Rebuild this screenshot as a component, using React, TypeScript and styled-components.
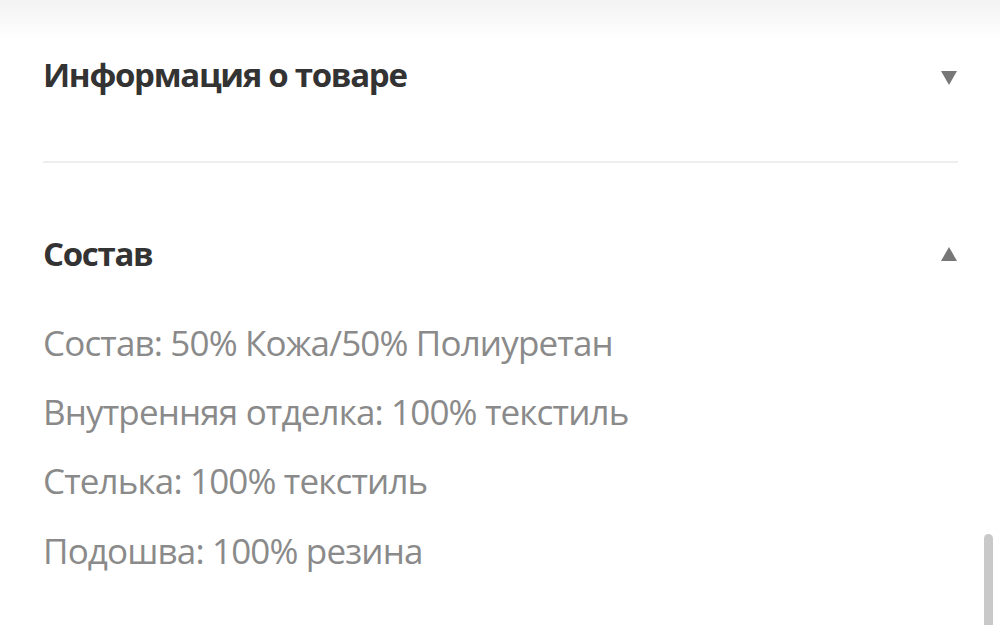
import styled, { createGlobalStyle } from "styled-components"

const GlobalStyle = createGlobalStyle`
  html, body {
    margin: 0;
    padding: 0;
    background: #fff;
  }
  body {
    font-family: "Open Sans", "Noto Sans", sans-serif;
    overflow: hidden;
  }
`

const Page = styled.div`
  position: relative;
  width: 1000px;
  height: 625px;
  background: #fff;
  overflow: hidden;
`

// soft shadow cast by the sticky block above
const TopShade = styled.div`
  position: absolute;
  top: 0;
  left: 0;
  right: 0;
  height: 40px;
  background: linear-gradient(#f3f3f3, rgba(255, 255, 255, 0));
  pointer-events: none;
`

const Sections = styled.div`
  padding: 0 42px 0 43px;
`

const Section = styled.section<{ $divider?: boolean }>`
  padding-bottom: ${(p) => (p.$divider ? "12px" : "0")};
  border-bottom: ${(p) => (p.$divider ? "2px solid #eeeeee" : "none")};
`

const Header = styled.div<{ $top: number; $height: number }>`
  display: flex;
  align-items: center;
  justify-content: space-between;
  padding-top: ${(p) => p.$top}px;
  height: ${(p) => p.$height}px;
`

const Title = styled.h2`
  margin: 0;
  font-size: 33px;
  line-height: 1.2;
  font-weight: 700;
  color: #333;
  letter-spacing: -1.3px;
`

const Caret = styled.span<{ $up?: boolean }>`
  width: 0;
  height: 0;
  margin-right: 1px;
  border-left: 8px solid transparent;
  border-right: 8px solid transparent;
  ${(p) =>
    p.$up
      ? "border-bottom: 14px solid #777;"
      : "border-top: 14px solid #777; transform: translateY(3px);"}
`

const Lines = styled.div`
  display: flex;
  flex-direction: column;
  margin-top: 23px;
`

const Line = styled.p`
  margin: 0;
  height: 69.2px;
  line-height: 69.2px;
  font-size: 35px;
  color: #8a8a8a;
  letter-spacing: -0.85px;
  white-space: nowrap;
`

const ScrollThumb = styled.div`
  position: absolute;
  left: 984px;
  top: 534px;
  width: 9px;
  height: 100px;
  border-radius: 4.5px;
  background: #c9c9c9;
`

const composition = [
  "Состав: 50% Кожа/50% Полиуретан",
  "Внутренняя отделка: 100% текстиль",
  "Стелька: 100% текстиль",
  "Подошва: 100% резина",
]

export default function App() {
  return (
    <Page>
      <GlobalStyle />
      <Sections>
        <Section $divider>
          <Header $top={0} $height={149}>
            <Title>Информация о товаре</Title>
            <Caret />
          </Header>
        </Section>
        <Section>
          <Header $top={60} $height={62}>
            <Title>Состав</Title>
            <Caret $up />
          </Header>
          <Lines>
            {composition.map((t) => (
              <Line key={t}>{t}</Line>
            ))}
          </Lines>
        </Section>
      </Sections>
      <TopShade />
      <ScrollThumb />
    </Page>
  )
}
